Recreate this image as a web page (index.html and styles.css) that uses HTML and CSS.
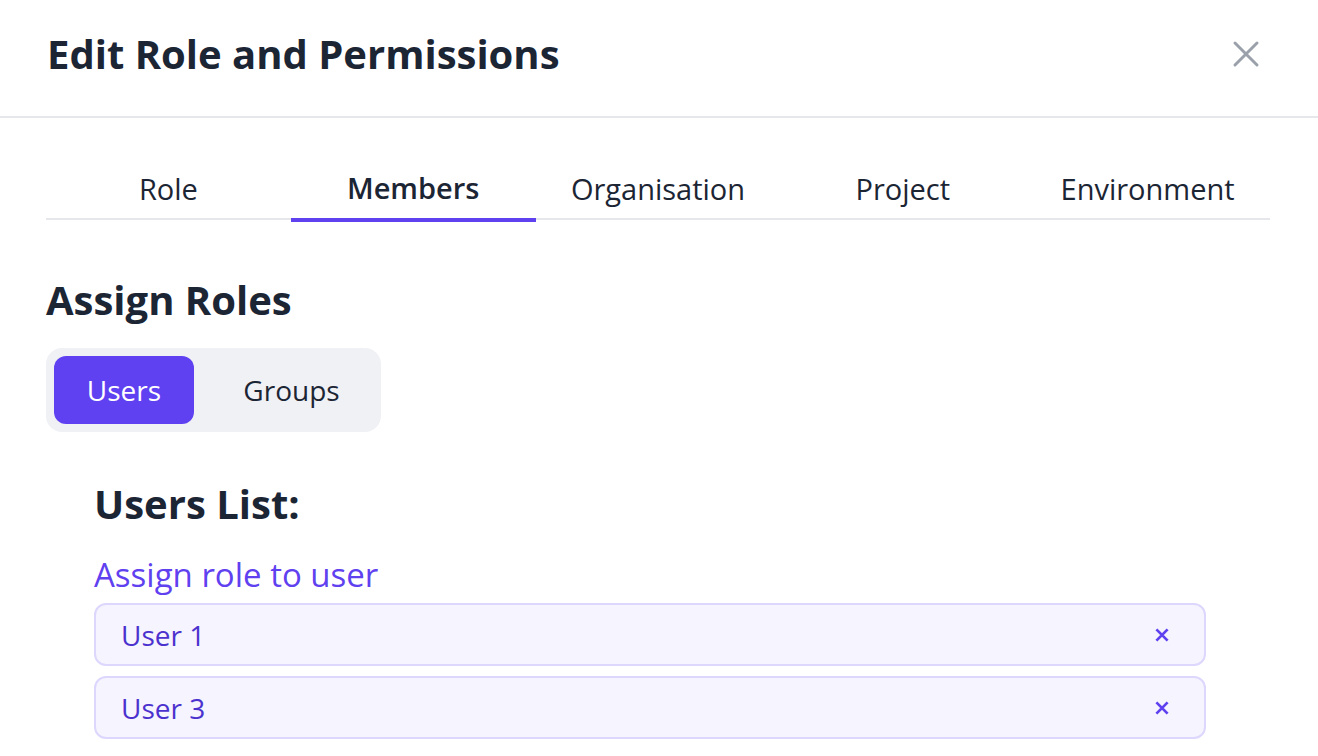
FILE: index.html
```html
<!DOCTYPE html>
<html>
<head>
<meta charset="utf-8">
<link rel="stylesheet" href="styles.css">
</head>
<body>
<div class="modal">
  <header class="modal-header">
    <h1 class="modal-title">Edit Role and Permissions</h1>
    <button class="close-btn" aria-label="Close">
      <svg width="28" height="28" viewBox="0 0 28 28"><path d="M3 3 L25 25 M25 3 L3 25" stroke="#9ba1ab" stroke-width="3" stroke-linecap="round" fill="none"/></svg>
    </button>
  </header>
  <div class="modal-body">
    <nav class="tabs">
      <div class="tab">Role</div>
      <div class="tab active">Members</div>
      <div class="tab">Organisation</div>
      <div class="tab">Project</div>
      <div class="tab">Environment</div>
    </nav>
    <h2 class="section-title">Assign Roles</h2>
    <div class="segmented">
      <div class="seg active">Users</div>
      <div class="seg seg-groups">Groups</div>
    </div>
    <div class="users">
      <h3 class="users-title">Users List:</h3>
      <div class="assign-link">Assign role to user</div>
      <div class="pill"><span>User 1</span><svg class="pill-x" width="14" height="14" viewBox="0 0 14 14"><path d="M1.4 1.4 L12.6 12.6 M12.6 1.4 L1.4 12.6" stroke="#5f41f0" stroke-width="2.7" fill="none"/></svg></div>
      <div class="pill"><span>User 3</span><svg class="pill-x" width="14" height="14" viewBox="0 0 14 14"><path d="M1.4 1.4 L12.6 12.6 M12.6 1.4 L1.4 12.6" stroke="#5f41f0" stroke-width="2.7" fill="none"/></svg></div>
    </div>
  </div>
</div>
</body>
</html>
```
FILE: styles.css
```css
* { box-sizing: border-box; }
html, body { margin: 0; padding: 0; background: #fff; }
body { font-family: "Open Sans", "Noto Sans", sans-serif; color: #1c2534; overflow: hidden; }
.modal-header {
  height: 118px;
  display: flex;
  align-items: center;
  justify-content: space-between;
  padding: 0 58px 0 47px;
  border-bottom: 2px solid #e6e7ea;
}
.modal-title { margin: 0; font-size: 40px; font-weight: 700; letter-spacing: 0; line-height: 1; padding-bottom: 8px; }
.close-btn { border: 0; background: none; padding: 0; display: flex; margin-bottom: 8px; }
.modal-body { padding: 0 48px 0 46px; }
.tabs {
  display: grid;
  grid-template-columns: repeat(5, 1fr);
  align-items: start;
  border-bottom: 2px solid #e6e7ea;
  margin-top: 50px;
}
.tab {
  text-align: center;
  font-size: 29px;
  font-weight: 500;
  height: 50px;
  line-height: 42px;
  color: #1c2534;
}
.tab.active { font-weight: 600; height: 54px; border-bottom: 4px solid #5f41f0; margin-bottom: -4px; line-height: 40px; }
.section-title { margin: 58px 0 0; font-size: 40px; font-weight: 700; line-height: 44px; }
.segmented {
  display: inline-flex;
  background: #f0f1f5;
  border-radius: 16px;
  padding: 8px;
  margin-top: 26px;
}
.seg {
  width: 140px;
  height: 68px;
  border-radius: 12px;
  font-size: 28px;
  font-weight: 500;
  display: flex;
  align-items: center;
  justify-content: center;
  color: #1c2534;
}
.seg-groups { width: 179px; padding-left: 16px; }
.seg.active { background: #5f41f1; color: #fff; }
.users { padding: 0 64px 0 48px; }
.users-title { margin: 50px 0 0; font-size: 40px; font-weight: 700; line-height: 44px; }
.assign-link { color: #5f41f0; font-size: 33px; font-weight: 500; margin-top: 29px; line-height: 40px; }
.pill {
  display: flex;
  justify-content: space-between;
  align-items: center;
  height: 63px;
  border: 2px solid #ddd7fd;
  background: #f6f4fe;
  border-radius: 12px;
  padding: 0 35px 0 25px;
  font-size: 28px;
  color: #4b32cf;
  margin-top: 8px;
}
.pill + .pill { margin-top: 10px; }
.pill-x { display: block; }
```
